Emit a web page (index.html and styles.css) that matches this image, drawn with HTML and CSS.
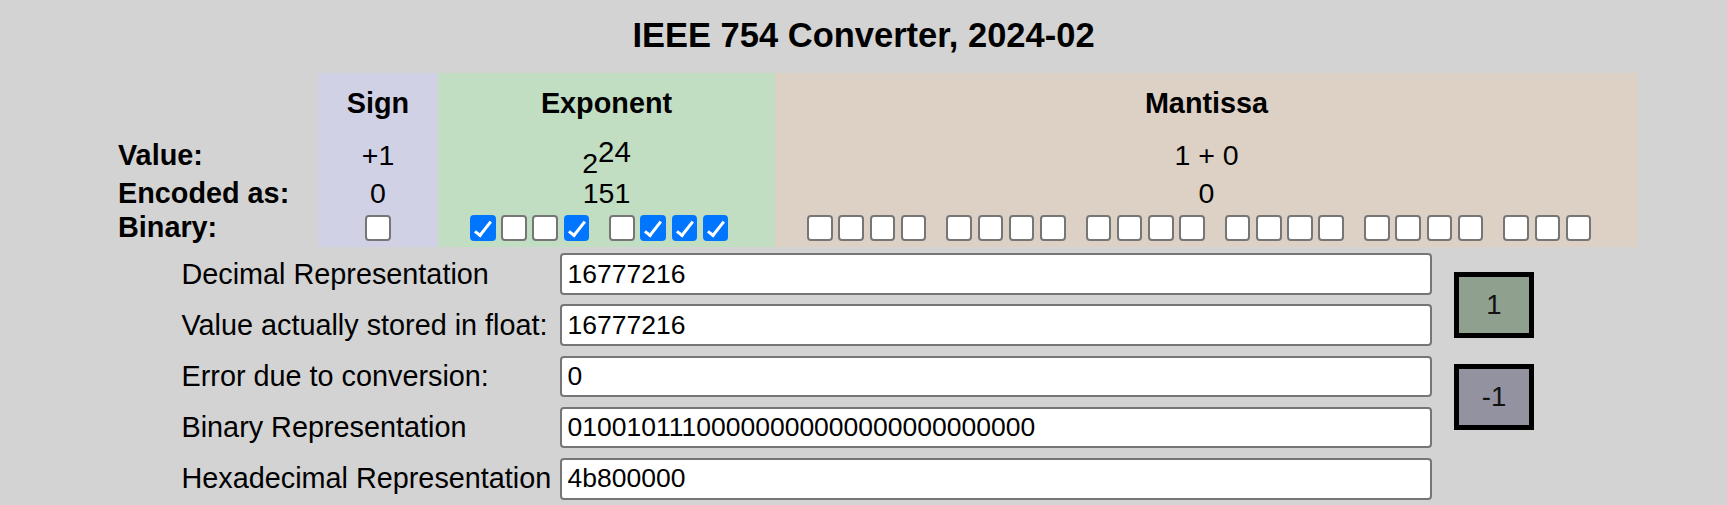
FILE: index.html
```html
<!DOCTYPE html>
<html lang="en">
<head>
<meta charset="utf-8">
<title>IEEE 754 Converter</title>
<link rel="stylesheet" href="styles.css">
</head>
<body>
<h1 class="title">IEEE 754 Converter, 2024-02</h1>

<div class="bits">
  <div class="cell lab"></div>
  <div class="cell sign head">Sign</div>
  <div class="cell exp head">Exponent</div>
  <div class="cell man head">Mantissa</div>

  <div class="cell lab">Value:</div>
  <div class="cell sign val">+1</div>
  <div class="cell exp val pow">2<sup class="sup">24</sup></div>
  <div class="cell man val">1 + 0</div>

  <div class="cell lab">Encoded as:</div>
  <div class="cell sign val">0</div>
  <div class="cell exp val">151</div>
  <div class="cell man val">0</div>

  <div class="cell lab last">Binary:</div>
  <div class="cell sign boxes last"><input type="checkbox" class="bit"></div>
  <div class="cell exp boxes last">
    <span class="grp"><input type="checkbox" class="bit" checked><input type="checkbox" class="bit"><input type="checkbox" class="bit"><input type="checkbox" class="bit" checked></span>
    <span class="grp"><input type="checkbox" class="bit"><input type="checkbox" class="bit" checked><input type="checkbox" class="bit" checked><input type="checkbox" class="bit" checked></span>
  </div>
  <div class="cell man boxes last">
    <span class="grp"><input type="checkbox" class="bit"><input type="checkbox" class="bit"><input type="checkbox" class="bit"><input type="checkbox" class="bit"></span>
    <span class="grp"><input type="checkbox" class="bit"><input type="checkbox" class="bit"><input type="checkbox" class="bit"><input type="checkbox" class="bit"></span>
    <span class="grp"><input type="checkbox" class="bit"><input type="checkbox" class="bit"><input type="checkbox" class="bit"><input type="checkbox" class="bit"></span>
    <span class="grp"><input type="checkbox" class="bit"><input type="checkbox" class="bit"><input type="checkbox" class="bit"><input type="checkbox" class="bit"></span>
    <span class="grp"><input type="checkbox" class="bit"><input type="checkbox" class="bit"><input type="checkbox" class="bit"><input type="checkbox" class="bit"></span>
    <span class="grp"><input type="checkbox" class="bit"><input type="checkbox" class="bit"><input type="checkbox" class="bit"></span>
  </div>
</div>

<div class="conv">
  <div class="fields">
    <label class="flabel">Decimal Representation</label>
    <input class="field" type="text" value="16777216">
    <label class="flabel">Value actually stored in float:</label>
    <input class="field" type="text" value="16777216">
    <label class="flabel">Error due to conversion:</label>
    <input class="field" type="text" value="0">
    <label class="flabel">Binary Representation</label>
    <input class="field" type="text" value="01001011100000000000000000000000">
    <label class="flabel">Hexadecimal Representation</label>
    <input class="field" type="text" value="4b800000">
  </div>
  <div class="buttons">
    <button class="btn plus" type="button">1</button>
    <button class="btn minus" type="button">-1</button>
  </div>
</div>
</body>
</html>
```

FILE: styles.css
```css
html, body {
  background: #d3d3d3;
}
body {
  margin: 8px;
  font-family: "Liberation Sans", Arial, sans-serif;
  font-size: 28.8px;
  color: #000;
}
.title {
  font-size: 34.5px;
  font-weight: bold;
  text-align: center;
  margin: 8px 0 18px;
  line-height: normal;
}
.bits {
  display: grid;
  grid-template-columns: 201px 120px 337px 863px;
  grid-template-rows: 61.5px 41.3px 34.7px 36.5px;
  margin-left: 109px;
  width: 1521px;
}
.cell {
  display: flex;
  align-items: center;
  justify-content: center;
  white-space: nowrap;
}
.lab {
  justify-content: flex-start;
  font-weight: bold;
  padding-left: 1px;
}
.last {
  padding-bottom: 1.5px;
}
.sign { background: #d1d1e5; }
.exp { background: #c1dec3; }
.man { background: #ddd1c5; }
.head {
  font-weight: bold;
}
.val {
  font-size: 28.5px;
}
.pow {
  display: block;
  text-align: center;
  padding-top: 12px;
}
.sup {
  font-size: 29.5px;
  vertical-align: 11px;
  line-height: 0;
}
.grp {
  display: flex;
  margin-right: 14.5px;
}
.bit {
  -webkit-appearance: none;
  appearance: none;
  box-sizing: border-box;
  flex: none;
  position: relative;
  width: 25.6px;
  height: 25.6px;
  margin: 0 2.8px;
  border: 2px solid #767676;
  border-radius: 4px;
  background: #fff;
}
.bit:checked {
  background: #0075ff;
  border-color: #0075ff;
}
.bit:checked::after {
  content: "";
  position: absolute;
  left: 7px;
  top: 1.2px;
  box-sizing: border-box;
  width: 8px;
  height: 19px;
  border: solid #fff;
  border-width: 0 3.2px 3.2px 0;
  transform: rotate(38deg);
}
.conv {
  display: flex;
  align-items: flex-start;
  margin-top: 6.3px;
  margin-left: 173.5px;
}
.fields {
  display: grid;
  grid-template-columns: 378px 872.5px;
  grid-auto-rows: 41.5px;
  row-gap: 9.7px;
}
.flabel {
  display: flex;
  align-items: center;
  white-space: nowrap;
}
.field {
  box-sizing: border-box;
  height: 41.5px;
  width: 100%;
  border: 2px solid #767676;
  border-radius: 4px;
  background: #fff;
  padding: 0 6px;
  font-family: "Liberation Sans", Arial, sans-serif;
  font-size: 26.5px;
  color: #000;
  margin: 0;
}
.buttons {
  display: flex;
  flex-direction: column;
  gap: 26.6px;
  margin-left: 22px;
  padding-top: 19px;
}
.btn {
  box-sizing: border-box;
  width: 80px;
  height: 65.5px;
  border: 5px solid #000;
  border-radius: 0;
  font-family: "Liberation Sans", Arial, sans-serif;
  font-size: 27.5px;
  color: #111;
  padding: 0;
  margin: 0;
}
.plus { background: #8fa08f; }
.minus { background: #9292a1; }
```
